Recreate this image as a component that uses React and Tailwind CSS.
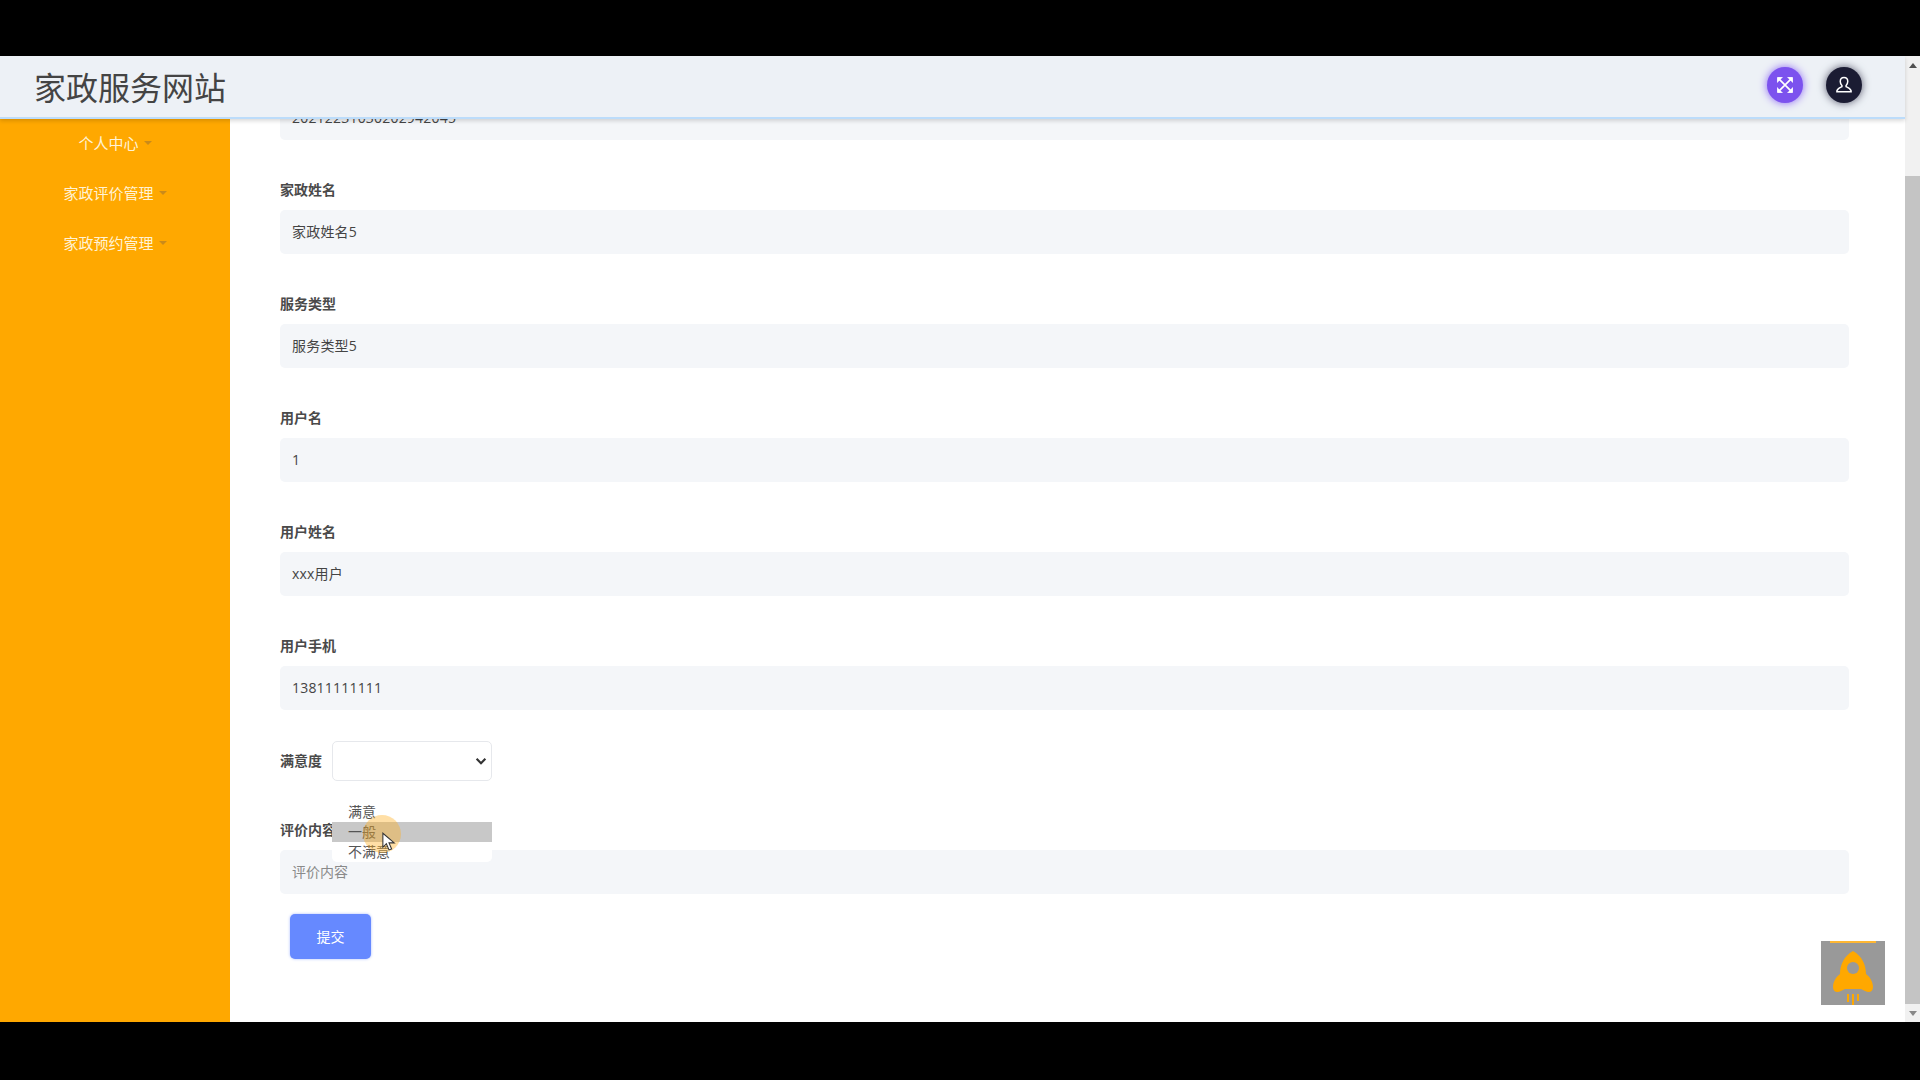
import React from "react";

const fields = [
	{ label: "家政姓名", value: "家政姓名5" },
	{ label: "服务类型", value: "服务类型5" },
	{ label: "用户名", value: "1" },
	{ label: "用户姓名", value: "xxx用户" },
	{ label: "用户手机", value: "13811111111" },
];

const menus = ["个人中心", "家政评价管理", "家政预约管理"];

const Field = ({ label, value }) => (
	<div className="h-[114px] pt-[7px]">
		<div className="h-[21px] text-[14px] leading-[22px] font-semibold text-[#4a4a4a]">{label}</div>
		<div className="mt-[10px] h-[44px] rounded-[5px] bg-[#f4f6f9] px-3 text-[14px] leading-[44px] tracking-[0.2px] text-[#444]">
			{value}
		</div>
	</div>
);

const Rocket = () => (
	<svg viewBox="0 0 64 64" className="h-[64px] w-[64px]">
		<path
			d="M32 10c-9 5-13 14-13 23-4 3-7 8-7 13 0 5 4 6 8 4l4-2h16l4 2c4 2 8 1 8-4 0-5-3-10-7-13 0-9-4-18-13-23z"
			fill="#ffa800"
		/>
		<circle cx="32" cy="27" r="6" fill="#999" />
		<path d="M27 53v8M32 53v12M37 53v7" stroke="#ffa800" strokeWidth="2" />
	</svg>
);

export default function App() {
	return (
		<div className="flex h-screen w-full flex-col overflow-hidden bg-black font-['Open_Sans','Noto_Sans_CJK_SC',sans-serif]">
			<div className="h-[56px] shrink-0 bg-black" />
			<div className="relative flex h-[966px] shrink-0">
				<div className="flex min-w-0 flex-1 flex-col">
					{/* header */}
					<header className="z-10 flex h-[63px] shrink-0 items-center justify-between border-b-2 border-[#bcdcfa] bg-[#edf1f6] pb-[3px] pl-[34px] pr-[43px] shadow-[0_2px_4px_rgba(0,0,0,0.15)]">
						<div className="pt-[6px] text-[32px] leading-[50px] text-[#444]">家政服务网站</div>
						<div className="flex items-center gap-[23px]">
							<button className="flex h-9 w-9 items-center justify-center rounded-full bg-[#7c52ee] shadow-[0_0_8px_#8a63f5]">
								<svg viewBox="0 0 24 24" className="h-[20px] w-[20px]" fill="none" stroke="#fff" strokeWidth="2">
									<path d="M4 4l16 16M20 4L4 20" />
									<path d="M3 9V3h6M15 3h6v6M21 15v6h-6M9 21H3v-6" fill="#fff" strokeWidth="1" />
								</svg>
							</button>
							<button className="flex h-9 w-9 items-center justify-center rounded-full bg-[#1b1c33] shadow-[0_0_8px_#55566a]">
								<svg viewBox="0 0 24 24" className="h-[20px] w-[20px]" fill="none" stroke="#fff" strokeWidth="1.8">
									<path d="M12 3c-3 0-4.500 2.200-4.500 4.800 0 2 1 3.700 2 4.700v1.500c-2 .8-5 2-6 5v1h17v-1c-1-3-4-4.200-6-5v-1.500c1-1 2-2.700 2-4.700C16.500 5.200 15 3 12 3z" />
								</svg>
							</button>
						</div>
					</header>
					<div className="flex min-h-0 flex-1">
						{/* sidebar */}
						<aside className="w-[230px] shrink-0 bg-[#ffa800]">
							{menus.map((m) => (
								<div key={m} className="flex h-[50px] items-center justify-center gap-[5px] pb-[2px] text-[15px] text-[#fff3d6]">
									<span>{m}</span>
									<span className="mb-[1px] h-0 w-0 border-x-[4px] border-t-[4px] border-x-transparent border-t-[#c98a1a]" />
								</div>
							))}
						</aside>
						{/* form */}
						<main className="min-w-0 flex-1 overflow-hidden bg-white pl-[50px] pr-[56px]">
							<div className="-mt-[23px] h-[44px] rounded-[5px] bg-[#f4f6f9] px-3 text-[14px] leading-[44px] tracking-[0.2px] text-[#444]">
								20212231030202942045
							</div>
							<div className="h-[32px]" />
							{fields.map((f) => (
								<Field key={f.label} label={f.label} value={f.value} />
							))}
							<div className="relative -mt-[1px]">
								<div className="flex h-[40px] items-center">
									<span className="mb-[2px] w-[52px] text-[14px] font-semibold text-[#4a4a4a]">满意度</span>
									<div className="flex h-[40px] w-[160px] items-center justify-end rounded-[5px] border border-[#e6e8ec] bg-white pr-[3px]">
										<svg viewBox="0 0 16 16" className="h-[14px] w-[14px]" fill="none" stroke="#333" strokeWidth="2.500">
											<path d="M3 5.500l5 5 5-5" />
										</svg>
									</div>
								</div>
								<div className="mt-[37px] h-[23px] text-[14px] leading-[24px] font-semibold text-[#4a4a4a]">评价内容</div>
								<div className="mt-[9px] h-[44px] rounded-[5px] bg-[#f4f6f9] px-3 text-[14px] leading-[44px] text-[#8a8a8a]">
									评价内容
								</div>
								{/* open select list */}
								<div className="absolute left-[52px] top-[61px] w-[160px] rounded-b-[5px] bg-white text-[14px] leading-[20px] text-[#555]">
									<div className="pl-4">满意</div>
									<div className="bg-[#c8c8c8] pl-4">一般</div>
									<div className="pl-4">不满意</div>
								</div>
								{/* cursor highlight */}
								<div className="absolute left-[83px] top-[74px] h-[38px] w-[38px] rounded-full bg-[#ffb020]/40" />
								<svg viewBox="0 0 16 22" className="absolute left-[102px] top-[91px] h-[20px] w-[14px]">
									<path d="M1 1v16l4-4 3 7 3-1-3-7h6z" fill="#fff" stroke="#333" strokeWidth="1.200" />
								</svg>
							</div>
							<button className="ml-[10px] mt-[20px] h-[45px] w-[81px] rounded-[5px] bg-[#6689ff] text-[14px] text-white shadow-[0_0_3px_#a9bcff]">
								提交
							</button>
						</main>
					</div>
				</div>
				{/* scrollbar */}
				<div className="flex w-[15px] shrink-0 flex-col bg-[#f1f1f1]">
					<div className="flex h-[18px] items-center justify-center">
						<span className="h-0 w-0 border-x-[4px] border-b-[5px] border-x-transparent border-b-[#505050]" />
					</div>
					<div className="mt-[102px] flex-1 bg-[#c4c4c4]" />
					<div className="flex h-[18px] items-center justify-center">
						<span className="h-0 w-0 border-x-[4px] border-t-[5px] border-x-transparent border-t-[#888]" />
					</div>
				</div>
				{/* back to top */}
				<div className="absolute left-[1821px] top-[885px] h-[64px] w-[64px] bg-[#999]">
					<div className="absolute left-[9px] top-0 h-[2px] w-[46px] bg-[#ffb733]" />
					<Rocket />
				</div>
			</div>
			<div className="flex-1 bg-black" />
		</div>
	);
}
